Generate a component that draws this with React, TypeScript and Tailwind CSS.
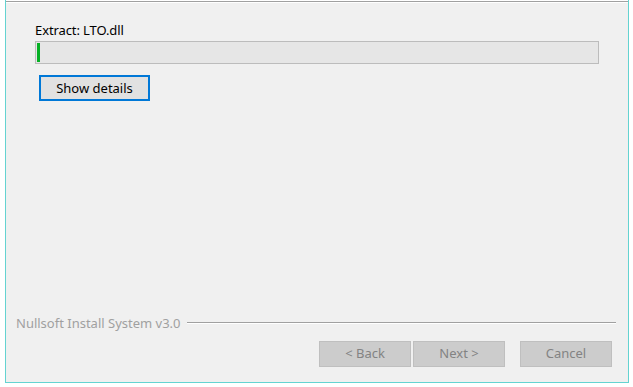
import React from "react";

const FONT = "font-['Segoe_UI','Noto_Sans','Open_Sans',sans-serif]";

function NavButton({ label, className = "" }: { label: string; className?: string }) {
  return (
    <button
      disabled
      className={`flex h-[26px] w-[92px] items-center justify-center border border-[#bfbfbf] bg-[#cccccc] text-[13px] text-[#838383] ${className}`}
    >
      {label}
    </button>
  );
}

export default function App() {
  return (
    <div className={`h-[387px] w-[633px] bg-white text-black ${FONT}`}>
      <div className="ml-[5px] flex h-[383px] w-[624px] flex-col border-x border-b border-[#64d3d1] bg-[#f0f0f0]">
        {/* header edge */}
        <div className="h-px bg-white" />
        <div className="h-px bg-[#a0a0a0]" />
        <div className="h-px bg-white" />

        {/* install progress */}
        <div className="flex flex-col pl-[29px] pt-[19px]">
          <div className="h-4 text-[13px] leading-4 tracking-[-0.1px]">Extract: LTO.dll</div>
          <div className="mt-[3px] flex h-[23px] w-[564px] border border-[#bcbcbc] bg-[#e6e6e6] p-px">
            <div className="h-full w-[3px] bg-[#06b025]" />
          </div>
          <button className="ml-[4px] mt-[11px] flex h-[26px] w-[111px] items-center justify-center border-2 border-[#0078d7] bg-[#e1e1e1] text-[13px] leading-4">
            Show details
          </button>
        </div>

        <div className="flex-1" />

        {/* branding line */}
        <div className="flex h-4 items-center pl-[10px] pr-[12px]">
          <span className="text-[13px] leading-4 text-[#a0a0a0]">Nullsoft Install System v3.0</span>
          <div className="ml-[6px] flex flex-1 flex-col">
            <div className="h-px bg-[#a0a0a0]" />
            <div className="h-px bg-white" />
          </div>
        </div>

        {/* nav buttons */}
        <div className="mb-[15px] mt-[10px] flex justify-end pr-[16px]">
          <NavButton label="< Back" />
          <NavButton label="Next >" className="ml-[2px]" />
          <NavButton label="Cancel" className="ml-[15px]" />
        </div>
      </div>
    </div>
  );
}
